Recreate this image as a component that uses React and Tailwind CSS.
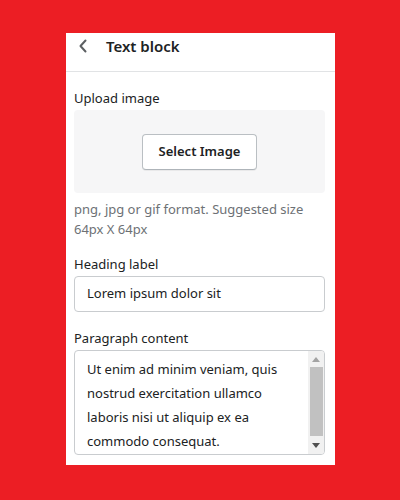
import React from "react";

export default function App() {
  const font = { fontFamily: '"Noto Sans", "Open Sans", Arial, sans-serif' };
  return (
    <div className="w-[400px] h-[500px] bg-[#ec1e24] pl-[66px] pt-[33px]" style={font}>
      <div className="w-[269px] h-[432px] bg-white overflow-hidden flex flex-col">
        <div className="h-[39px] border-b border-[#e1e3e5] pt-[3px] pl-[12px] shrink-0">
          <div className="h-[20px] flex items-center">
            <svg width="10" height="14" viewBox="0 0 10 14">
              <path d="M7.5 1.5 L2.5 7 L7.5 12.5" fill="none" stroke="#5c5f62" strokeWidth="2" strokeLinecap="round" strokeLinejoin="round" />
            </svg>
            <span className="ml-[18px] text-[15px] font-semibold text-[#202223] leading-[20px]">Text block</span>
          </div>
        </div>
        <div className="pl-2 pr-[10px] pt-4 flex flex-col">
          <label className="text-[13px] leading-[20px] text-[#202223] mb-[2px]">Upload image</label>
          <div className="h-[83px] bg-[#f6f6f7] rounded-[4px] flex items-center justify-center">
            <button className="w-[115px] h-[36px] bg-white border border-[#babfc3] border-b-[#aeb4b9] rounded-[4px] text-[13px] font-semibold text-[#202223] shadow-[0_1px_0_rgba(0,0,0,0.05)]">
              Select Image
            </button>
          </div>
          <p className="mt-[6px] text-[13px] leading-[20px] text-[#6d7175]">
            png, jpg or gif format. Suggested size 64px X 64px
          </p>
          <label className="mt-[15px] text-[13px] leading-[20px] text-[#202223] mb-[2px]">Heading label</label>
          <div className="h-[36px] border border-[#c9cccf] rounded-[4px] px-[12px] text-[13px] text-[#202223] flex items-center">
            Lorem ipsum dolor sit
          </div>
          <label className="mt-[16px] text-[13px] leading-[20px] text-[#202223] mb-[2px]">Paragraph content</label>
          <div className="h-[105px] border border-[#c9cccf] rounded-[4px] flex overflow-hidden">
            <div className="flex-1 pl-[12px] pr-[4px] pt-[6px] text-[13px] leading-[24px] text-[#202223]">
              Ut enim ad minim veniam, quis nostrud exercitation ullamco laboris nisi ut aliquip ex ea commodo consequat.
            </div>
            <div className="w-[16px] bg-[#f1f1f1] flex flex-col items-center">
              <div className="h-[16px] flex items-center justify-center">
                <svg width="8" height="5" viewBox="0 0 8 5"><path d="M4 0 L8 5 L0 5 Z" fill="#a3a3a3" /></svg>
              </div>
              <div className="w-[13px] ml-[1px] h-[69px] bg-[#c1c1c1]" />
              <div className="flex-1 flex items-center justify-center">
                <svg width="8" height="5" viewBox="0 0 8 5"><path d="M0 0 L8 0 L4 5 Z" fill="#505050" /></svg>
              </div>
            </div>
          </div>
        </div>
      </div>
    </div>
  );
}
